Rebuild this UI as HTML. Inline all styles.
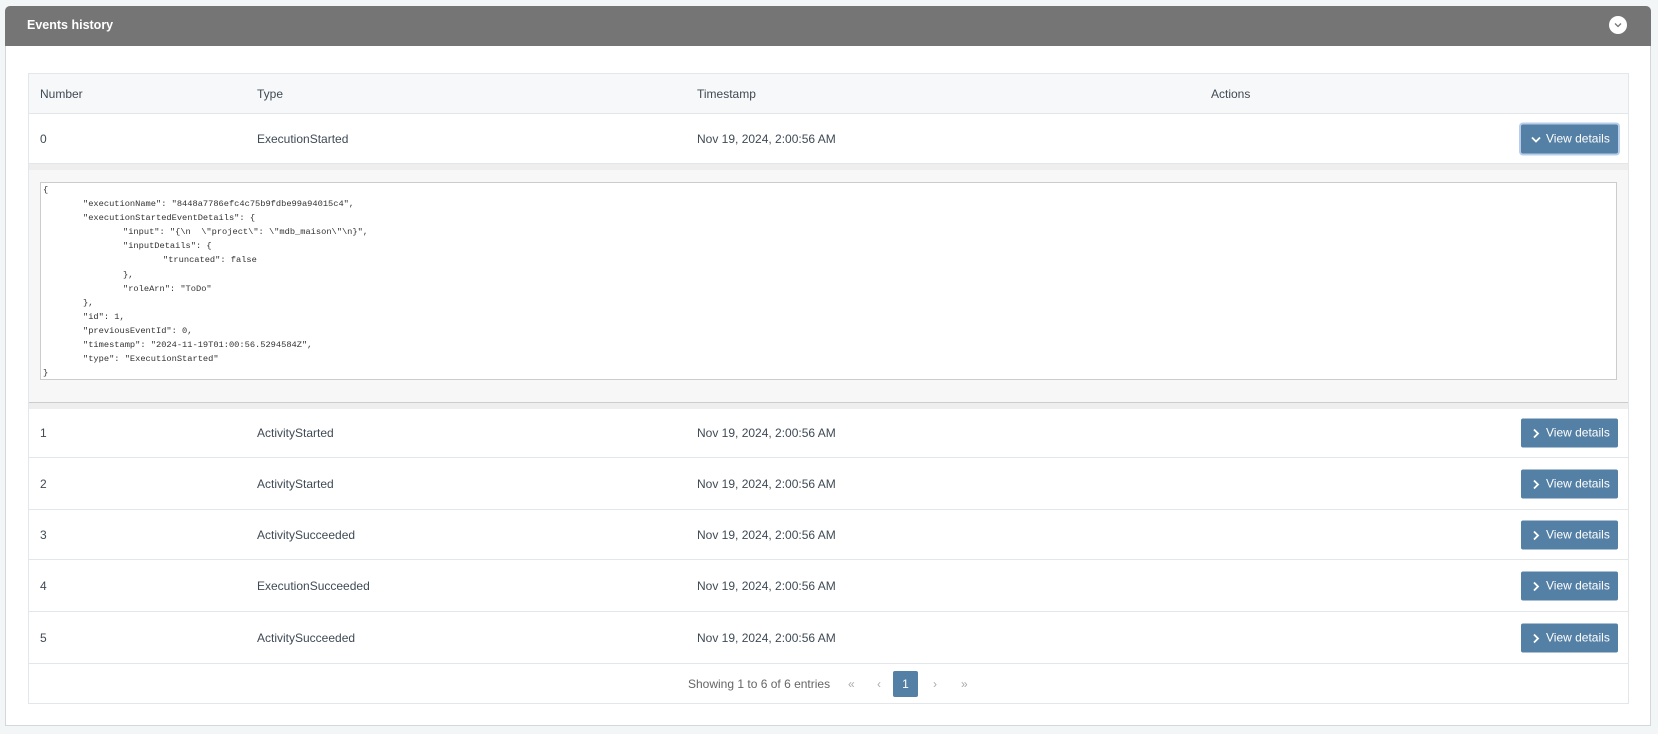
<!DOCTYPE html>
<html><head><style>
*{box-sizing:border-box;margin:0;padding:0}
body{width:1658px;height:734px;background:#f3f6f6;font-family:"Liberation Sans",sans-serif;font-size:12px;color:#3f4a55;position:relative;overflow:hidden}
.card{position:absolute;left:5px;top:6px;width:1646px;height:720px;background:#fff;border:1px solid #d4d8da;border-radius:5px 5px 0 0}
.hdr{position:absolute;left:-1px;top:-1px;width:1646px;height:40px;background:#757575;border-radius:5px 5px 0 0;color:#fff;font-weight:bold;font-size:12.5px;padding:12px 0 0 22px}
.tog{position:absolute;right:24px;top:10px;width:18px;height:18px;border-radius:50%;background:#fff}
.tbl{position:absolute;left:22px;top:66px;width:1601px;height:631px;border:1px solid #e4e7e9}
.row{position:absolute;left:0;width:1599px;border-bottom:1px solid #e4e7e9}
.c{position:absolute;top:50%;transform:translateY(-50%)}
.btn{position:absolute;right:10px;top:50%;transform:translateY(-50%);width:97px;height:29px;background:#5580a5;border-radius:2px;color:#fff;font-size:12px;line-height:29px;padding-left:25px}
.btn svg{position:absolute;left:10px;top:10px}
pre{position:absolute;left:11px;top:12px;width:1577px;height:198px;border:1px solid #ccc;background:#fff;font-family:"Liberation Mono",monospace;font-size:8.7px;line-height:14.1px;padding:0 2px;tab-size:40px;-moz-tab-size:40px;color:#333}
</style></head><body>
<div class="card">
<div class="hdr">Events history<div class="tog"><svg width="18" height="18"><path d="M6 7.5l3 3 3-3" stroke="#757575" stroke-width="1.3" fill="none"/></svg></div></div>
<div class="tbl">
<div class="row" style="top:0;height:40px;background:#f7f8f9"><span class="c" style="left:11px">Number</span><span class="c" style="left:228px">Type</span><span class="c" style="left:668px">Timestamp</span><span class="c" style="left:1182px">Actions</span></div>
<div class="row" style="top:40px;height:50px"><span class="c" style="left:11px">0</span><span class="c" style="left:228px">ExecutionStarted</span><span class="c" style="left:668px">Nov 19, 2024, 2:00:56 AM</span><div class="btn" style="box-shadow:0 0 0 2px #b8cdea"><svg width="10" height="10"><path d="M1 3l4 4 4-4" stroke="#fff" stroke-width="1.8" fill="none"/></svg>View details</div></div>
<div class="row" style="top:90px;height:239px;background:#f7f7f7;border-top:6px solid #eee;border-bottom:1px solid #ccc">
<pre>{
	"executionName": "8448a7786efc4c75b9fdbe99a94015c4",
	"executionStartedEventDetails": {
		"input": "{\n  \"project\": \"mdb_maison\"\n}",
		"inputDetails": {
			"truncated": false
		},
		"roleArn": "ToDo"
	},
	"id": 1,
	"previousEventId": 0,
	"timestamp": "2024-11-19T01:00:56.5294584Z",
	"type": "ExecutionStarted"
}</pre></div>
<div style="position:absolute;left:0;top:329px;width:1599px;height:6px;background:#eee"></div>
<div class="row" style="top:335px;height:49px"><span class="c" style="left:11px">1</span><span class="c" style="left:228px">ActivityStarted</span><span class="c" style="left:668px">Nov 19, 2024, 2:00:56 AM</span><div class="btn"><svg width="10" height="10"><path d="M3 1l4 4-4 4" stroke="#fff" stroke-width="1.8" fill="none"/></svg>View details</div></div>
<div class="row" style="top:384px;height:52px"><span class="c" style="left:11px">2</span><span class="c" style="left:228px">ActivityStarted</span><span class="c" style="left:668px">Nov 19, 2024, 2:00:56 AM</span><div class="btn"><svg width="10" height="10"><path d="M3 1l4 4-4 4" stroke="#fff" stroke-width="1.8" fill="none"/></svg>View details</div></div>
<div class="row" style="top:436px;height:50px"><span class="c" style="left:11px">3</span><span class="c" style="left:228px">ActivitySucceeded</span><span class="c" style="left:668px">Nov 19, 2024, 2:00:56 AM</span><div class="btn"><svg width="10" height="10"><path d="M3 1l4 4-4 4" stroke="#fff" stroke-width="1.8" fill="none"/></svg>View details</div></div>
<div class="row" style="top:486px;height:52px"><span class="c" style="left:11px">4</span><span class="c" style="left:228px">ExecutionSucceeded</span><span class="c" style="left:668px">Nov 19, 2024, 2:00:56 AM</span><div class="btn"><svg width="10" height="10"><path d="M3 1l4 4-4 4" stroke="#fff" stroke-width="1.8" fill="none"/></svg>View details</div></div>
<div class="row" style="top:538px;height:52px"><span class="c" style="left:11px">5</span><span class="c" style="left:228px">ActivitySucceeded</span><span class="c" style="left:668px">Nov 19, 2024, 2:00:56 AM</span><div class="btn"><svg width="10" height="10"><path d="M3 1l4 4-4 4" stroke="#fff" stroke-width="1.8" fill="none"/></svg>View details</div></div>
<div class="row" style="top:590px;height:39px;border:none">
<span class="c" style="left:659px;color:#666">Showing 1 to 6 of 6 entries</span>
<span class="c" style="left:819px;color:#aaa">«</span>
<span class="c" style="left:848px;color:#aaa">‹</span>
<div class="c" style="left:864px;width:25px;height:26px;background:#5580a5;border-radius:2px;color:#fff;text-align:center;line-height:26px">1</div>
<span class="c" style="left:904px;color:#aaa">›</span>
<span class="c" style="left:932px;color:#aaa">»</span>
</div>
</div>
</div>
</body></html>
